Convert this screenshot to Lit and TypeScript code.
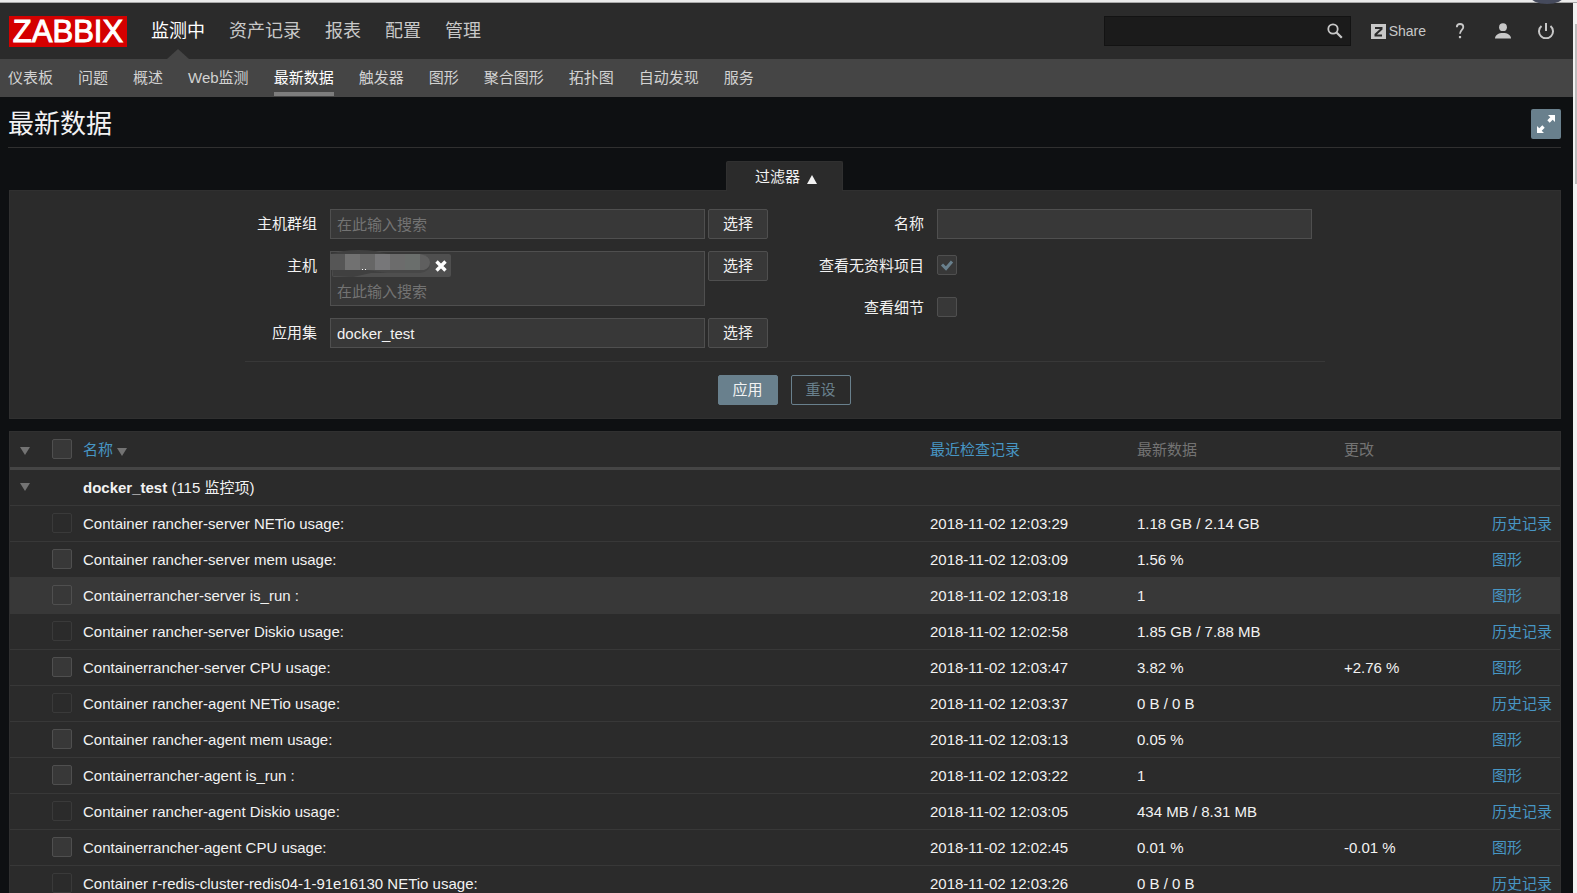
import { LitElement, html, css, nothing } from "lit";
import { customElement } from "lit/decorators.js";
import { classMap } from "lit/directives/class-map.js";

interface Item {
  name: string;
  time: string;
  value: string;
  change?: string;
  graph: boolean;
  hover?: boolean;
}

const MAIN = ["监测中", "资产记录", "报表", "配置", "管理"];
const SUB = ["仪表板", "问题", "概述", "Web监测", "最新数据", "触发器", "图形", "聚合图形", "拓扑图", "自动发现", "服务"];

const ITEMS: Item[] = [
  { name: "Container rancher-server NETio usage:", time: "2018-11-02 12:03:29", value: "1.18 GB / 2.14 GB", graph: false },
  { name: "Container rancher-server mem usage:", time: "2018-11-02 12:03:09", value: "1.56 %", graph: true },
  { name: "Containerrancher-server is_run :", time: "2018-11-02 12:03:18", value: "1", graph: true, hover: true },
  { name: "Container rancher-server Diskio usage:", time: "2018-11-02 12:02:58", value: "1.85 GB / 7.88 MB", graph: false },
  { name: "Containerrancher-server CPU usage:", time: "2018-11-02 12:03:47", value: "3.82 %", change: "+2.76 %", graph: true },
  { name: "Container rancher-agent NETio usage:", time: "2018-11-02 12:03:37", value: "0 B / 0 B", graph: false },
  { name: "Container rancher-agent mem usage:", time: "2018-11-02 12:03:13", value: "0.05 %", graph: true },
  { name: "Containerrancher-agent is_run :", time: "2018-11-02 12:03:22", value: "1", graph: true },
  { name: "Container rancher-agent Diskio usage:", time: "2018-11-02 12:03:05", value: "434 MB / 8.31 MB", graph: false },
  { name: "Containerrancher-agent CPU usage:", time: "2018-11-02 12:02:45", value: "0.01 %", change: "-0.01 %", graph: true },
  { name: "Container r-redis-cluster-redis04-1-91e16130 NETio usage:", time: "2018-11-02 12:03:26", value: "0 B / 0 B", graph: false },
];

@customElement("app-root")
export class AppRoot extends LitElement {
  static styles = css`
    :host {
      display: block;
      position: relative;
      height: 100vh;
      overflow: hidden;
      background: #0e1012;
      color: #f2f2f2;
      font: 15px/20px "Liberation Sans", "Noto Sans CJK SC", sans-serif;
    }
    * { box-sizing: border-box; }
    a { color: inherit; text-decoration: none; }
    svg { display: block; }
    button, input { font: inherit; color: inherit; margin: 0; }
    .strip { height: 3px; background: #ebebeb; border-bottom: 1px solid #a9a9a9; }
    .bubble { position: absolute; top: 0; right: 13px; }
    .scroll { position: absolute; top: 3px; right: 0; bottom: 0; width: 4px; background: #f1f1f1; }
    .thumb { height: 160px; margin: 21px 0 0 2px; background: #bcbcbc; }
    .page { margin-right: 4px; }
    .top { display: flex; align-items: center; height: 56px; padding: 0 19px 0 9px; background: #2b2b2b; }
    .logo { width: 118px; height: 31px; background: #d40000; color: #fff; font-size: 31px; line-height: 32px; text-align: center; -webkit-text-stroke: 1px #fff; }
    .main { display: flex; gap: 24px; margin-left: 24px; flex: 1; font-size: 18px; line-height: 56px; color: #c8c8c8; }
    .main .on { color: #fff; position: relative; }
    .main .on::after {
      content: ""; position: absolute; bottom: 0; left: 50%; margin-left: -11px;
      border: 11px solid transparent; border-top: 0; border-bottom: 10px solid #454545;
    }
    .search { display: flex; align-items: center; width: 247px; height: 30px; padding-right: 7px; background: #1b1b1b; border: 1px solid #131313; }
    .search input { flex: 1; min-width: 0; height: 28px; border: 0; background: none; padding: 0 8px; outline: 0; }
    .icon { border: 0; background: none; padding: 0; color: #c8c8c8; }
    .share { display: flex; align-items: center; gap: 3px; margin-left: 20px; font-size: 14px; color: #c8c8c8; }
    .tools { display: flex; align-items: center; gap: 27px; margin-left: 26px; color: #c8c8c8; }
    .sub { display: flex; gap: 25px; height: 38px; padding: 0 8px; background: #454545; color: #d2d2d2; line-height: 38px; }
    .sub .on { color: #fff; height: 37px; border-bottom: 4px solid #7d7d7d; }
    .head { display: flex; justify-content: space-between; align-items: center; margin: 0 12px 0 8px; padding-top: 4px; height: 51px; border-bottom: 1px solid #303030; }
    h1 { margin: 0; font-size: 26px; line-height: 36px; font-weight: 400; }
    .expand { width: 30px; height: 30px; border: 0; border-radius: 2px; background: #69808d; color: #fff; padding: 6px; }
    .tabs { display: flex; justify-content: center; margin-top: 13px; padding-right: 4px; }
    .tab { display: flex; align-items: center; justify-content: center; gap: 7px; width: 117px; height: 30px; margin-bottom: -1px; padding: 0 0 0 3px; border: 1px solid #303030; border-bottom: 0; border-radius: 2px 2px 0 0; background: #2b2b2b; position: relative; }
    .tab svg { margin-top: 5px; }
    .filter { margin: 0 12px 0 9px; border: 1px solid #303030; background: #2b2b2b; padding: 18px 0 13px; }
    .cols { display: flex; width: 1080px; max-width: 100%; margin: 0 auto; padding: 0 0 13px; border-bottom: 1px solid #383838; }
    .col { display: flex; flex-direction: column; gap: 12px; }
    .first { width: 523px; }
    .second { width: 544px; }
    .row { display: flex; align-items: flex-start; min-height: 30px; }
    .row > label { width: 72px; margin-right: 13px; line-height: 30px; text-align: right; white-space: nowrap; }
    .second .row > label { width: 156px; }
    .field { flex: 1; min-width: 0; border: 1px solid #4f4f4f; background: #383838; height: 30px; padding: 0 6px; outline: 0; }
    input::placeholder { color: #737373; opacity: 1; }
    .multi { flex: 1; border: 1px solid #4f4f4f; background: #383838; height: 55px; }
    .multi input { display: block; width: 100%; height: 26px; border: 0; background: none; padding: 0 6px; outline: 0; }
    .chip { display: flex; align-items: center; justify-content: flex-end; width: 119px; height: 23px; margin: 2px 0 1px 1px; padding-right: 4px; background: #4f4f4f; border-radius: 2px; position: relative; }
    .mask { position: absolute; left: -5px; top: -4px; }
    .btn { width: 60px; height: 30px; margin-left: 3px; padding: 0; border: 1px solid #4f4f4f; border-radius: 2px; background: #383838; }
    .actions { display: flex; justify-content: center; gap: 13px; margin-top: 13px; padding-right: 2px; }
    .actions .btn { margin: 0; border-color: #69808d; background: #69808d; }
    .actions .ghost { background: none; color: #69808d; }
    .check { appearance: none; display: block; width: 20px; height: 20px; border: 1px solid #4f4f4f; border-radius: 2px; background: #383838; }
    .check:disabled { background: none; border-color: #3a3a3a; }
    .row .check { margin-top: 4px; }
    .check:checked { background: #383838 url("data:image/svg+xml,%3Csvg xmlns='http://www.w3.org/2000/svg' viewBox='0 0 18 18'%3E%3Cpath d='M4 8.500 8 12.500l6-7' fill='none' stroke='%2369808d' stroke-width='3'/%3E%3C/svg%3E"); }
    .data { margin: 12px 12px 0 9px; border: 1px solid #303030; border-bottom: 0; background: #2b2b2b; }
    table { width: 100%; table-layout: fixed; border-collapse: separate; border-spacing: 0; }
    th, td { height: 36px; padding: 0 5px; border-bottom: 1px solid #383838; text-align: left; font-weight: 400; white-space: nowrap; }
    th { height: 38px; border-bottom: 3px solid #454545; color: #737373; }
    tr.hover td { background: #383838; }
    .c1 { width: 37px; } .c2 { width: 31px; } .c4 { width: 207px; } .c5 { width: 207px; } .c6 { width: 148px; } .c7 { width: 73px; }
    th:first-child, td:first-child { padding-left: 10px; }
    .arrow { display: block; border: 0; background: none; padding: 0; }
    th .arrow { margin-top: 3px; }
    td .arrow, td .check, th .check { margin-bottom: 2px; }
    .link { color: #4796c4; }
    .sort { display: inline-flex; align-items: center; gap: 4px; }
    .sort svg { margin-top: 4px; }
  `;

  private down = html`<svg width="10" height="8" viewBox="0 0 10 8"><path d="M0 0h10L5 8z" fill="#737373" /></svg>`;

  private line(i: Item) {
    return html`<tr class=${classMap({ hover: !!i.hover })}>
      <td></td>
      <td><input class="check" type="checkbox" aria-label=${i.name} ?disabled=${!i.graph} /></td>
      <td>${i.name}</td>
      <td>${i.time}</td>
      <td>${i.value}</td>
      <td>${i.change ?? nothing}</td>
      <td><a class="link" href="#">${i.graph ? "图形" : "历史记录"}</a></td>
    </tr>`;
  }

  render() {
    return html`
      <div class="strip"></div>
      <div class="page">
        <header class="top">
          <a class="logo" href="#">ZABBIX</a>
          <nav class="main">${MAIN.map((t, n) => html`<a href="#" class=${n === 0 ? "on" : ""}>${t}</a>`)}</nav>
          <div class="search">
            <input type="text" aria-label="搜索" />
            <button class="icon" aria-label="搜索">
              <svg width="16" height="16" viewBox="0 0 16 16" fill="none" stroke="currentColor"><circle cx="6" cy="6" r="4.700" stroke-width="1.800" /><path d="m9.500 9.500 5.300 5.300" stroke-width="2.200" /></svg>
            </button>
          </div>
          <a class="share" href="#">
            <svg width="15" height="15" viewBox="0 0 15 15"><path d="M0 0h15v15H0z" fill="currentColor" /><path d="M4 4h6.500v1L4.500 10.500v1H11" fill="none" stroke="#2b2b2b" stroke-width="2" /></svg>
            Share
          </a>
          <div class="tools">
            <button class="icon" aria-label="帮助"><svg width="16" height="16" viewBox="0 0 16 16"><path d="M4.800 4.200C4.800 2 6 1 8 1s3.300 1 3.300 3C11.300 6.800 8 7 8 10.800" fill="none" stroke="currentColor" stroke-width="1.800" /><path d="M6.900 13h2.200v2.200H6.900z" fill="currentColor" /></svg></button>
            <button class="icon" aria-label="用户"><svg width="16" height="16" viewBox="0 0 16 16" fill="currentColor"><circle cx="8" cy="4.200" r="3.900" /><path d="M0 15.500c0-3.500 3.500-5.500 8-5.500s8 2 8 5.500z" /></svg></button>
            <button class="icon" aria-label="退出"><svg width="16" height="16" viewBox="0 0 16 16" fill="none" stroke="currentColor" stroke-width="2"><path d="M3.500 3A7 7 0 1 0 12.500 3M8 0v8" /></svg></button>
          </div>
        </header>
        <nav class="sub">${SUB.map((t, n) => html`<a href="#" class=${n === 4 ? "on" : ""}>${t}</a>`)}</nav>
        <div class="head">
          <h1>最新数据</h1>
          <button class="expand" aria-label="全屏">
            <svg width="18" height="18" viewBox="0 0 18 18" fill="currentColor"><path d="M11 0h7v7l-2.300-2.300-3 3-2.400-2.400 3-3zM0 18v-7l2.300 2.300 3-3 2.400 2.400-3 3L7 18z" /></svg>
          </button>
        </div>
        <div class="tabs">
          <button class="tab">过滤器 <svg width="10" height="9" viewBox="0 0 10 9"><path d="M0 9h10L5 0z" fill="#f2f2f2" /></svg></button>
        </div>
        <form class="filter">
          <div class="cols">
            <div class="col first">
              <div class="row"><label for="g">主机群组</label><input id="g" class="field" type="text" placeholder="在此输入搜索" /><button type="button" class="btn">选择</button></div>
              <div class="row"><label for="h">主机</label>
                <div class="multi">
                  <div class="chip">
                    <svg class="mask" width="106" height="28" viewBox="0 0 106 28">
                      <path d="M4 4Q22-2 48 1l18 4v18H44L26 27 6 26z" fill="#404040" />
                      <path d="M3 4h90q10 2 10 10t-10 9H60L40 20H3z" fill="#474747" />
                      <path d="M93 4q10 2 10 8t-6 8h-4z" fill="#5f5f5f" />
                      <path d="M3 4h15v16H3z" fill="#565656" /><path d="M18 4h15v16H18z" fill="#717171" /><path d="M33 4h15v16H33z" fill="#666" /><path d="M48 4h15v16H48z" fill="#777779" /><path d="M63 4h15v16H63z" fill="#6c6c6c" /><path d="M78 4h15v16H78z" fill="#6a6e6c" />
                      <path d="M35 19h1v1h-1zM38 19h1v1h-1z" fill="#fff" />
                    </svg>
                    <button type="button" class="icon" aria-label="移除"><svg width="12" height="12" viewBox="0 0 12 12"><path d="m1.500 1.500 9 9m0-9-9 9" stroke="#fff" stroke-width="3.400" /></svg></button>
                  </div>
                  <input id="h" type="text" placeholder="在此输入搜索" />
                </div>
                <button type="button" class="btn">选择</button></div>
              <div class="row"><label for="a">应用集</label><input id="a" class="field" type="text" .value=${"docker_test"} /><button type="button" class="btn">选择</button></div>
            </div>
            <div class="col second">
              <div class="row"><label for="n">名称</label><input id="n" class="field" type="text" /></div>
              <div class="row"><label for="e">查看无资料项目</label><input id="e" class="check" type="checkbox" .checked=${true} /></div>
              <div class="row"><label for="d">查看细节</label><input id="d" class="check" type="checkbox" /></div>
            </div>
          </div>
          <div class="actions"><button type="button" class="btn">应用</button><button type="button" class="btn ghost">重设</button></div>
        </form>
        <div class="data">
          <table>
            <colgroup><col class="c1" /><col class="c2" /><col /><col class="c4" /><col class="c5" /><col class="c6" /><col class="c7" /></colgroup>
            <thead>
              <tr>
                <th><button class="arrow" aria-label="展开全部">${this.down}</button></th>
                <th><input class="check" type="checkbox" aria-label="全选" /></th>
                <th><a class="link sort" href="#">名称 ${this.down}</a></th>
                <th><a class="link" href="#">最近检查记录</a></th>
                <th>最新数据</th>
                <th>更改</th>
                <th></th>
              </tr>
            </thead>
            <tbody>
              <tr><td><button class="arrow" aria-label="展开">${this.down}</button></td><td></td><td colspan="5"><b>docker_test</b> (115 监控项)</td></tr>
              ${ITEMS.map((i) => this.line(i))}
            </tbody>
          </table>
        </div>
      </div>
      <svg class="bubble" width="34" height="4" viewBox="0 0 34 4"><ellipse cx="17" cy="-4" rx="17" ry="8" fill="#454a5c" /></svg>
      <div class="scroll"><div class="thumb"></div></div>
    `;
  }
}
